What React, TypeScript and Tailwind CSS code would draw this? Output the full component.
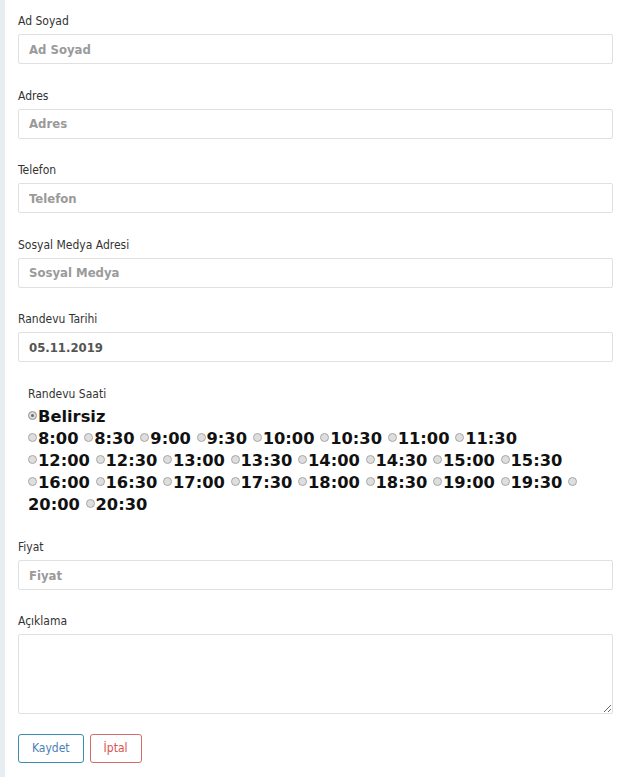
import React from 'react';

const times = [
  '8:00', '8:30', '9:00', '9:30', '10:00', '10:30', '11:00', '11:30',
  '12:00', '12:30', '13:00', '13:30', '14:00', '14:30', '15:00', '15:30',
  '16:00', '16:30', '17:00', '17:30', '18:00', '18:30', '19:00', '19:30',
];

const Radio: React.FC<{ checked?: boolean }> = ({ checked }) => (
  <span
    className={`inline-block w-[9px] h-[9px] rounded-full border border-[#a8a8a8] mr-[1px] align-[2px] ${
      checked ? 'bg-[#6b6b6b] shadow-[inset_0_0_0_2px_#dedede]' : 'bg-[#dedede]'
    }`}
  />
);

const Field: React.FC<{ label: string; placeholder?: string; value?: string }> = ({ label, placeholder, value }) => (
  <div className="mb-[23.5px]">
    <label className="block text-[12px] leading-[17px] text-[#333] mb-[4px]">{label}</label>
    <input
      readOnly
      value={value}
      placeholder={placeholder}
      className="block w-full h-[30px] px-[10px] border border-[#e0e0e0] rounded-[2px] bg-white text-[13px] font-bold text-[#555] placeholder:text-[#9a9a9a] placeholder:font-bold outline-none"
    />
  </div>
);

const App: React.FC = () => {
  const rows = [times.slice(0, 8), times.slice(8, 16), times.slice(16, 24)];

  return (
    <div className="flex min-h-[777px] bg-white font-['DejaVu_Sans_Condensed','Liberation_Sans',sans-serif]">
      {/* sidebar edge */}
      <div className="w-[5px] shrink-0 bg-[#e8edf2]" />

      <div className="flex-1 pl-[13px] pr-[9px] pt-[13px]">
        <Field label="Ad Soyad" placeholder="Ad Soyad" />
        <Field label="Adres" placeholder="Adres" />
        <Field label="Telefon" placeholder="Telefon" />
        <Field label="Sosyal Medya Adresi" placeholder="Sosyal Medya" />
        <Field label="Randevu Tarihi" value="05.11.2019" />

        <div className="px-[10px] mb-[23.5px]">
          <div className="text-[12px] leading-[16px] text-[#333] mb-[4px]">Randevu Saati</div>
          <div className="font-['DejaVu_Sans',sans-serif] font-bold text-[16.3px] leading-[22px] text-[#111] whitespace-nowrap">
            <div>
              <Radio checked />Belirsiz
            </div>
            {rows.map((row, i) => (
              <div key={i}>
                {row.map((t) => (
                  <React.Fragment key={t}>
                    <Radio />
                    {t}{' '}
                  </React.Fragment>
                ))}
                {i === 2 && <Radio />}
              </div>
            ))}
            <div>
              20:00 <Radio />20:30
            </div>
          </div>
        </div>

        <div className="mb-[22.5px]">
          <label className="block text-[12px] leading-[17px] text-[#333] mb-[4px]">Fiyat</label>
          <input
            placeholder="Fiyat"
            className="block w-full h-[30px] px-[10px] border border-[#e0e0e0] rounded-[2px] text-[13px] font-bold text-[#555] placeholder:text-[#9a9a9a] outline-none"
          />
        </div>

        <div className="mb-[20px]">
          <label className="block text-[12px] leading-[17px] text-[#333] mb-[4px]">Açıklama</label>
          <textarea className="block w-full h-[80px] px-[10px] py-[6px] border border-[#e0e0e0] rounded-[2px] text-[13px] outline-none" />
        </div>

        <div className="flex gap-[6px]">
          <button className="h-[29px] px-[13px] border border-[#3d8bb4] rounded-[3px] bg-white text-[12px] text-[#4a7fb8]">
            Kaydet
          </button>
          <button className="h-[29px] px-[13px] border border-[#d46b6b] rounded-[3px] bg-white text-[12px] text-[#d9534f]">
            İptal
          </button>
        </div>
      </div>
    </div>
  );
};

export default App;
